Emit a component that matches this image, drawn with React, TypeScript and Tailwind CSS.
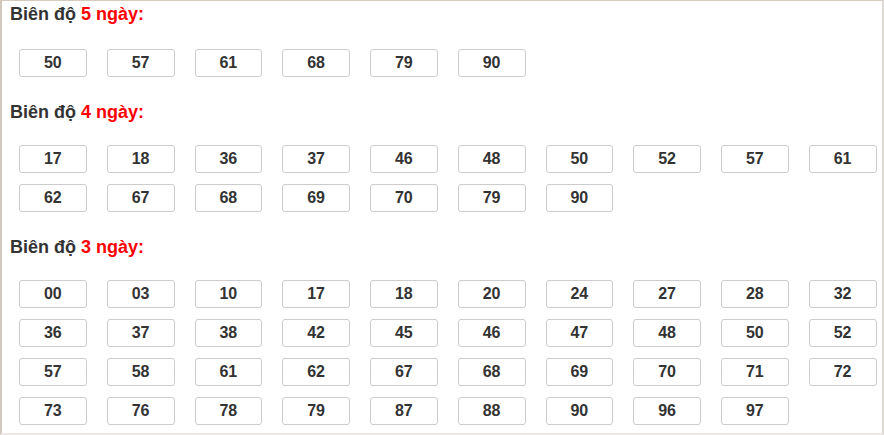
import React from "react";

const sections: { days: number; nums: string[] }[] = [
  { days: 5, nums: ["50", "57", "61", "68", "79", "90"] },
  {
    days: 4,
    nums: ["17", "18", "36", "37", "46", "48", "50", "52", "57", "61", "62", "67", "68", "69", "70", "79", "90"],
  },
  {
    days: 3,
    nums: [
      "00", "03", "10", "17", "18", "20", "24", "27", "28", "32",
      "36", "37", "38", "42", "45", "46", "47", "48", "50", "52",
      "57", "58", "61", "62", "67", "68", "69", "70", "71", "72",
      "73", "76", "78", "79", "87", "88", "90", "96", "97",
    ],
  },
];

const App = () => {
  return (
    <div className="h-[435px] w-[884px] overflow-hidden border-t border-l-2 border-r-2 border-b-2 border-t-[#d6cabd] border-l-[#d3c8bc] border-r-[#dcd8d4] border-b-[#ebe8e5] bg-white font-['Liberation_Sans',Arial,sans-serif]">
      {sections.map((s, i) => (
        <div key={s.days} className={i === 0 ? "pt-[3px]" : "pt-[25px]"}>
          <div className="pl-[8px] text-[18px] leading-[20px] font-bold text-[#333]">
            Biên độ <span className="text-[#f00]">{s.days} ngày:</span>
          </div>
          <div className={`grid grid-cols-[repeat(10,67.75px)] gap-x-[20px] gap-y-[11px] pl-[17px] ${i === 0 ? "mt-[25px]" : "mt-[23px]"}`}>
            {s.nums.map((n, j) => (
              <div
                key={j}
                className="flex h-[28px] items-center justify-center rounded-[3px] border border-[#ccc] text-[16px] font-bold text-[#333]"
              >
                {n}
              </div>
            ))}
          </div>
        </div>
      ))}
    </div>
  );
};

export default App;
